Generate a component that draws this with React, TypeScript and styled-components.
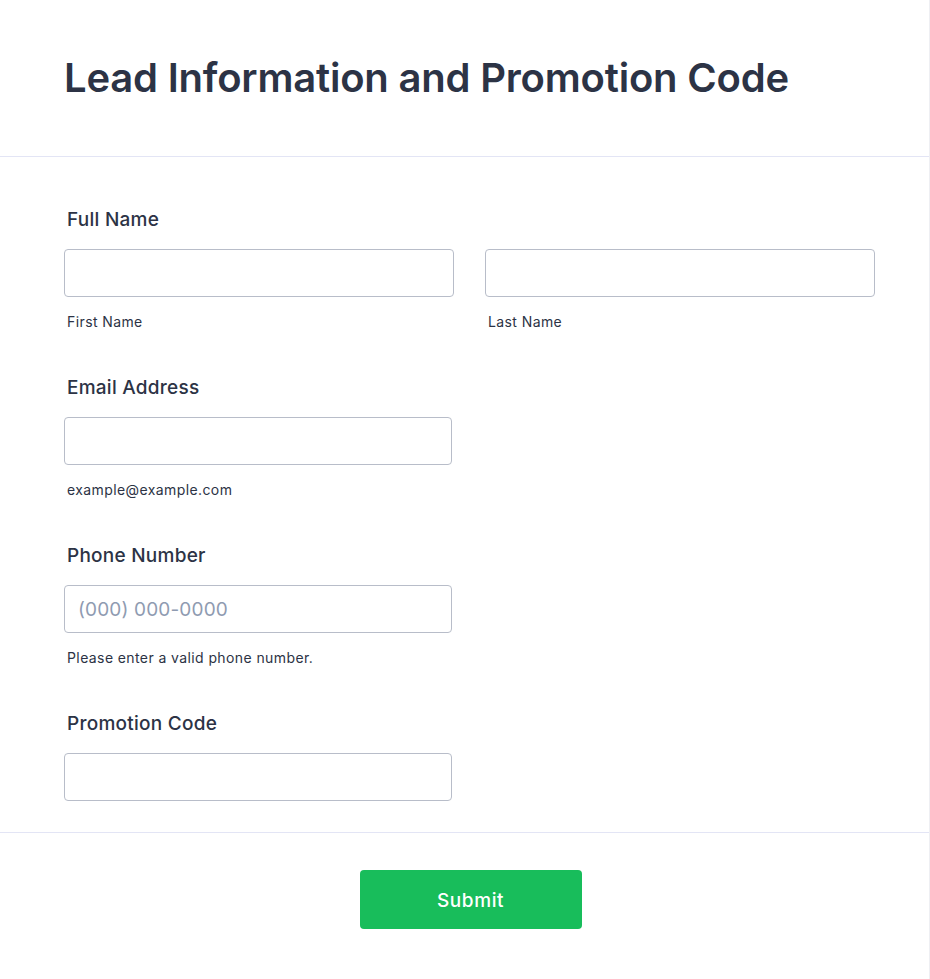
import styled, { createGlobalStyle } from "styled-components";

const GlobalStyle = createGlobalStyle`
  html, body {
    margin: 0;
    padding: 0;
    background: #ffffff;
  }
  body {
    font-family: Inter, "Noto Sans", "Liberation Sans", sans-serif;
    color: #2c3345;
  }
  * {
    box-sizing: border-box;
  }
`;

type Field = {
  label: string;
  placeholder?: string;
  sublabel?: string;
};

const fields: Field[] = [
  { label: "Email Address", sublabel: "example@example.com" },
  { label: "Phone Number", placeholder: "(000) 000-0000", sublabel: "Please enter a valid phone number." },
  { label: "Promotion Code" },
];

const App = () => {
  return (
    <>
      <GlobalStyle />
      <Card>
        <Header>
          <Title>Lead Information and Promotion Code</Title>
        </Header>
        <Body>
          <FieldBlock>
            <Label>Full Name</Label>
            <NameRow>
              <NamePart>
                <Input type="text" $wide />
                <SubLabel>First Name</SubLabel>
              </NamePart>
              <NamePart>
                <Input type="text" $wide />
                <SubLabel>Last Name</SubLabel>
              </NamePart>
            </NameRow>
          </FieldBlock>
          {fields.map((f) => (
            <FieldBlock key={f.label}>
              <Label>{f.label}</Label>
              <Input type="text" placeholder={f.placeholder} />
              {f.sublabel && <SubLabel>{f.sublabel}</SubLabel>}
            </FieldBlock>
          ))}
        </Body>
        <Footer>
          <SubmitButton type="button">Submit</SubmitButton>
        </Footer>
      </Card>
    </>
  );
};

export default App;

const Card = styled.div`
  width: 930px;
  background: #ffffff;
  border-right: 1px solid #eeeff3;
`;

const Header = styled.div`
  padding: 49px 64px 49px;
  border-bottom: 1px solid #e3e5f5;
`;

const Title = styled.h1`
  margin: 0;
  font-size: 40px;
  line-height: 58px;
  font-weight: 600;
  color: #2c3345;
  letter-spacing: -0.2px;
`;

const Body = styled.div`
  display: flex;
  flex-direction: column;
  gap: 41px;
  padding: 48px 54px 31px 64px;
  border-bottom: 1px solid #e3e5f5;
`;

const FieldBlock = styled.div`
  display: flex;
  flex-direction: column;
  align-items: flex-start;
`;

const Label = styled.label`
  font-size: 19px;
  line-height: 27px;
  font-weight: 500;
  letter-spacing: 0.25px;
  color: #2c3345;
  padding-top: 1px;
  margin: 0 0 16px 3px;
`;

const NameRow = styled.div`
  display: flex;
  gap: 31px;
`;

const NamePart = styled.div`
  display: flex;
  flex-direction: column;
`;

const Input = styled.input<{ $wide?: boolean }>`
  width: ${(p) => (p.$wide ? "390px" : "388px")};
  height: 48px;
  border: 1px solid #b8bdc9;
  border-radius: 4px;
  padding: 0 13px;
  font-family: Inter, "Noto Sans", "Liberation Sans", sans-serif;
  font-size: 19px;
  letter-spacing: 0.15px;
  color: #2c3345;
  background: #ffffff;
  outline: none;
  &::placeholder {
    color: #8f9bb1;
  }
`;

const SubLabel = styled.span`
  display: block;
  margin: 15px 0 0 3px;
  font-size: 14px;
  line-height: 20px;
  letter-spacing: 0.4px;
  color: #2c3345;
`;

const Footer = styled.div`
  display: flex;
  justify-content: center;
  padding: 37px 0 50px 12px;
`;

const SubmitButton = styled.button`
  width: 222px;
  height: 59px;
  border: none;
  border-radius: 4px;
  background: #18bd5b;
  color: #ffffff;
  font-family: Inter, "Noto Sans", "Liberation Sans", sans-serif;
  font-size: 19px;
  font-weight: 500;
  letter-spacing: 0.6px;
  padding-top: 3px;
  cursor: pointer;
`;
